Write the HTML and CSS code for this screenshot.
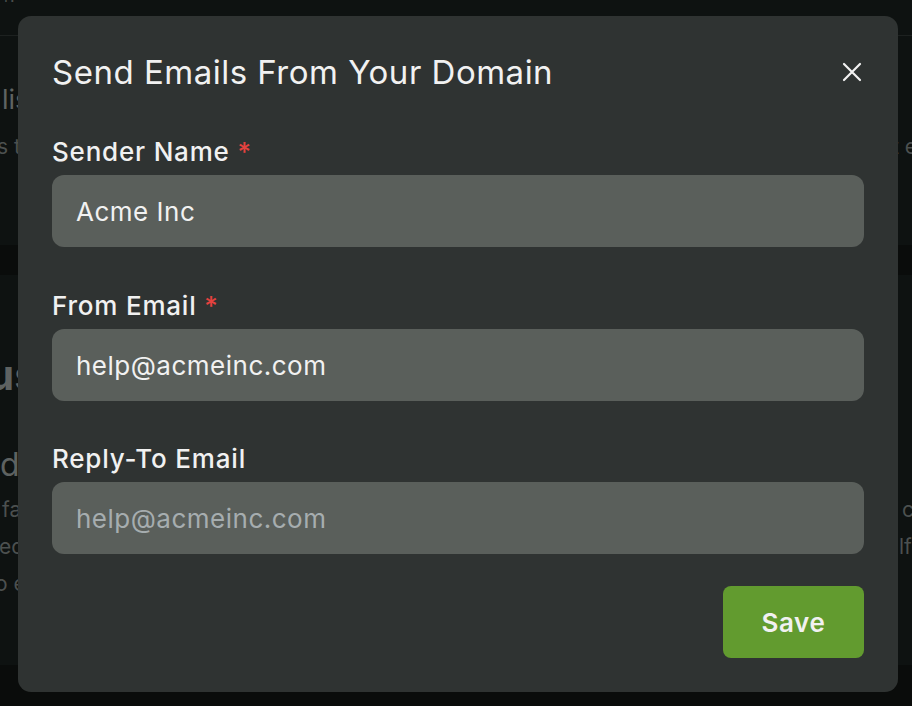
FILE: index.html
```html
<!DOCTYPE html>
<html lang="en">
<head>
<meta charset="utf-8">
<title>Send Emails From Your Domain</title>
<link rel="stylesheet" href="styles.css">
</head>
<body>
<div class="page">
  <header class="topbar"><span class="topbar-text">r:</span></header>
  <section class="card card-first">
    <div class="row">
      <h2 class="card-title">lists</h2>
    </div>
    <div class="row">
      <p class="card-sub">s to</p>
      <p class="card-sub right">t email</p>
    </div>
  </section>
  <div class="band"></div>
  <section class="card card-second">
    <h1 class="big">us</h1>
    <h3 class="mid">d</h3>
    <div class="row first-line">
      <p class="line l-fa">fa</p>
      <p class="line right r-c">c</p>
    </div>
    <div class="row">
      <p class="line l-ed">ed</p>
      <p class="line right r-lf">lf</p>
    </div>
    <p class="line l-oe">o e</p>
  </section>
  <div class="band band-bottom"></div>
</div>

<div class="overlay">
  <div class="modal" role="dialog" aria-labelledby="modal-title">
    <div class="modal-head">
      <h2 id="modal-title" class="modal-title">Send Emails From Your Domain</h2>
      <button class="close" aria-label="Close">
        <svg width="22" height="22" viewBox="0 0 22 22" fill="none" stroke="#f2f2f2" stroke-width="2.2" stroke-linecap="round"><path d="M3 3L19 19M19 3L3 19"/></svg>
      </button>
    </div>
    <form class="form">
      <div class="field">
        <label class="label">Sender Name <span class="req">*</span></label>
        <input class="input" type="text" value="Acme Inc">
      </div>
      <div class="field">
        <label class="label">From Email <span class="req">*</span></label>
        <input class="input" type="text" value="help@acmeinc.com">
      </div>
      <div class="field">
        <label class="label">Reply-To Email</label>
        <input class="input" type="text" placeholder="help@acmeinc.com">
      </div>
      <div class="actions">
        <button type="button" class="save">Save</button>
      </div>
    </form>
  </div>
</div>
</body>
</html>
```

FILE: styles.css
```css
* { box-sizing: border-box; }
html, body { margin: 0; padding: 0; }
body {
  width: 912px;
  height: 706px;
  overflow: hidden;
  background: #0b0d0d;
  font-family: Inter, "Liberation Sans", sans-serif;
  color: #5e6261;
}
.page { display: flex; flex-direction: column; }
.topbar {
  height: 36px;
  background: #0e1211;
  border-bottom: 1px solid #1d2120;
  overflow: hidden;
}
.topbar-text {
  display: block;
  font-size: 16px;
  line-height: 16px;
  margin-top: -12px;
  margin-left: 4px;
  color: #4b4f4e;
  white-space: nowrap;
}
.card {
  background: #0e1211;
  overflow: hidden;
}
.card-first { height: 209px; padding-top: 48px; }
.band { height: 30px; background: #0a0c0b; }
.band-bottom { height: 42px; }
.card-second { height: 390px; padding-top: 75px; }
.row { display: flex; }
.card-title {
  margin: 0 0 0 2px;
  font-size: 27px;
  font-weight: 400;
  line-height: 32px;
  color: #5f6362;
}
.card-sub {
  margin: 17px 0 0 -3px;
  font-size: 21px;
  line-height: 28px;
  color: #4c504f;
  white-space: nowrap;
}
.right {
  margin-left: auto;
  overflow: hidden;
  white-space: nowrap;
}
.card-sub.right { width: 20px; margin-left: auto; }
.big {
  margin: 0 0 0 -12px;
  font-size: 42px;
  font-weight: 700;
  line-height: 50px;
  color: #5e6261;
}
.mid {
  margin: 46px 0 0 0;
  font-size: 32px;
  font-weight: 400;
  line-height: 38px;
  color: #5e6261;
}
.line {
  margin: 0;
  font-size: 21px;
  line-height: 36px;
  color: #4c504f;
  white-space: nowrap;
}
.first-line { margin-top: 8px; }
.first-line + .row { margin-top: 1px; }
.l-fa { margin-left: 2px; }
.l-ed { margin-left: -1px; }
.l-oe { margin-left: -5px; margin-top: 1px; }
.line.r-c { width: 10px; margin-left: auto; }
.line.r-lf { width: 13px; margin-left: auto; }

.overlay {
  position: fixed;
  inset: 0;
  padding: 16px 14px 14px 18px;
}
.modal {
  width: 880px;
  height: 676px;
  background: #2f3332;
  border-radius: 13px;
  padding: 36px 34px 34px;
  display: flex;
  flex-direction: column;
  color: #f1f1f1;
}
.modal-head {
  display: flex;
  align-items: center;
  justify-content: space-between;
  height: 40px;
}
.modal-title {
  margin: 0;
  font-size: 33px;
  font-weight: 400;
  line-height: 40px;
  letter-spacing: 0.5px;
}
.close {
  background: none;
  border: 0;
  padding: 0;
  width: 22px;
  height: 22px;
  margin-right: 1px;
  cursor: pointer;
  display: flex;
}
.form { display: flex; flex-direction: column; margin-top: 42px; }
.field { display: flex; flex-direction: column; margin-bottom: 40px; }
.field:first-child { margin-bottom: 41px; }
.field:nth-child(3) { margin-bottom: 32px; }
.label {
  font-size: 26px;
  font-weight: 500;
  line-height: 36px;
  letter-spacing: 0.8px;
  margin-bottom: 5px;
  color: #f1f1f1;
}
.req { color: #e5423f; }
.input {
  height: 72px;
  border: 0;
  border-radius: 12px;
  background: #5a5f5b;
  padding: 0 24px;
  font-family: Inter, "Liberation Sans", sans-serif;
  font-size: 26px;
  letter-spacing: 0.5px;
  color: #f1f1f1;
  outline: none;
}
.input::placeholder { color: #a6adaf; }
.actions { display: flex; justify-content: flex-end; }
.save {
  width: 141px;
  height: 72px;
  border: 0;
  border-radius: 8px;
  background: #629b2f;
  color: #f1f1f1;
  font-family: Inter, "Liberation Sans", sans-serif;
  font-size: 26px;
  font-weight: 600;
  letter-spacing: 0.6px;
  cursor: pointer;
}
```
